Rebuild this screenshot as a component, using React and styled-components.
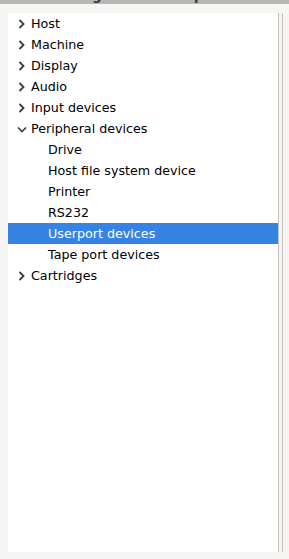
import * as React from 'react'
import styled, { createGlobalStyle } from 'styled-components'

const Global = createGlobalStyle`
  html, body {
    margin: 0;
    padding: 0;
    background: #f6f5f4;
  }
  body {
    font-family: "DejaVu Sans", sans-serif;
    font-size: 12.7px;
    color: #2e3436;
  }
`

const Window = styled.div`
  width: 289px;
  height: 559px;
  display: flex;
  flex-direction: column;
  background: #f6f5f4;
  overflow: hidden;
`

const TitleBar = styled.div`
  height: 4px;
  flex: none;
  background: #b6b6b5;
  overflow: hidden;
  position: relative;
`

const TitleText = styled.div`
  position: absolute;
  left: 48px;
  bottom: 2px;
  font-weight: bold;
  font-size: 13px;
  line-height: 13px;
  color: #2e3436;
  white-space: nowrap;
`

const Body = styled.div`
  flex: 1;
  display: flex;
  padding: 9px 6px 7px 8px;
  min-height: 0;
`

const Tree = styled.ul`
  flex: 1;
  margin: 0;
  padding: 0;
  list-style: none;
  background: #ffffff;
  border-right: 1px solid #c6c2bd;
`

const Gutter = styled.div`
  width: 3px;
  flex: none;
  border-right: 1px solid #c6c2bd;
`

const Row = styled.li`
  height: 21px;
  display: flex;
  align-items: center;
  padding-left: ${p => (p.$child ? 40 : 6)}px;
  background: ${p => (p.$selected ? '#3584e4' : 'transparent')};
  color: ${p => (p.$selected ? '#ffffff' : '#000000')};
  white-space: nowrap;
`

const Expander = styled.span`
  width: 16px;
  height: 21px;
  display: flex;
  align-items: center;
  justify-content: center;
  margin-right: 1px;
  color: #3d3d3d;
`

const Chevron = ({ open }) => (
  <svg width="12" height="12" viewBox="0 0 12 12" fill="none">
    {open ? (
      <path d="M2 4.5 L6 8.5 L10 4.5" stroke="currentColor" strokeWidth="1.6" />
    ) : (
      <path d="M3.5 2 L7.5 6 L3.5 10" stroke="currentColor" strokeWidth="1.8" />
    )}
  </svg>
)

const items = [
  { label: 'Host' },
  { label: 'Machine' },
  { label: 'Display' },
  { label: 'Audio' },
  { label: 'Input devices' },
  {
    label: 'Peripheral devices',
    open: true,
    children: ['Drive', 'Host file system device', 'Printer', 'RS232', 'Userport devices', 'Tape port devices']
  },
  { label: 'Cartridges' }
]

const selected = 'Userport devices'

export default function App() {
  return (
    <Window>
      <Global />
      <TitleBar>
        <TitleText>Settings - VICE userport</TitleText>
      </TitleBar>
      <Body>
        <Tree>
          {items.map(item => (
            <React.Fragment key={item.label}>
              <Row>
                <Expander>
                  <Chevron open={item.open} />
                </Expander>
                {item.label}
              </Row>
              {item.open &&
                item.children.map(child => (
                  <Row key={child} $child $selected={child === selected}>
                    {child}
                  </Row>
                ))}
            </React.Fragment>
          ))}
        </Tree>
        <Gutter />
      </Body>
    </Window>
  )
}
